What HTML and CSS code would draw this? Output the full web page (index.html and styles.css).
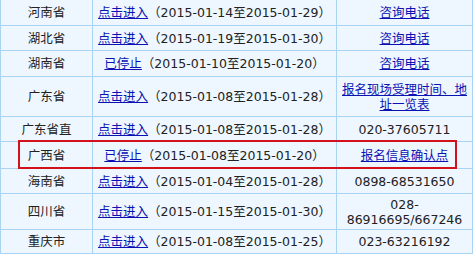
FILE: index.html
```html
<!DOCTYPE html>
<html lang="zh-CN">
<head>
<meta charset="utf-8">
<title>报名时间</title>
<link rel="stylesheet" href="styles.css">
</head>
<body>
<div class="wrap">
<table class="tbl">
  <colgroup><col class="c1"><col class="c2"><col class="c3"></colgroup>
  <tr class="h26"><td>河南省</td><td><a href="#">点击进入</a>（2015-01-14至2015-01-29）</td><td><a href="#">咨询电话</a></td></tr>
  <tr class="h25"><td>湖北省</td><td><a href="#">点击进入</a>（2015-01-19至2015-01-30）</td><td><a href="#">咨询电话</a></td></tr>
  <tr class="h26"><td>湖南省</td><td><a href="#">已停止</a>（2015-01-10至2015-01-20）</td><td><a href="#">咨询电话</a></td></tr>
  <tr class="h40"><td>广东省</td><td><a href="#">点击进入</a>（2015-01-08至2015-01-28）</td><td><a href="#">报名现场受理时间、地址一览表</a></td></tr>
  <tr class="h25"><td>广东省直</td><td><a href="#">点击进入</a>（2015-01-08至2015-01-28）</td><td>020-37605711</td></tr>
  <tr class="h27"><td>广西省</td><td><a href="#">已停止</a>（2015-01-08至2015-01-20）</td><td><a href="#">报名信息确认点</a></td></tr>
  <tr class="h25"><td>海南省</td><td><a href="#">点击进入</a>（2015-01-04至2015-01-28）</td><td>0898-68531650</td></tr>
  <tr class="h36"><td>四川省</td><td><a href="#">点击进入</a>（2015-01-15至2015-01-30）</td><td>028-86916695/667246</td></tr>
  <tr class="h24"><td>重庆市</td><td><a href="#">点击进入</a>（2015-01-08至2015-01-25）</td><td>023-63216192</td></tr>
</table>
<div class="mark"></div>
</div>
</body>
</html>
```
FILE: styles.css
```css
html, body {
  margin: 0;
  padding: 0;
  background: #ffffff;
}
.wrap {
  position: relative;
  width: 473px;
}
.tbl {
  width: 473px;
  border-collapse: separate;
  border-spacing: 0;
  table-layout: fixed;
  background: #eef7ff;
  font-family: "DejaVu Sans", "Noto Sans CJK SC", sans-serif;
  font-size: 12.5px;
  line-height: 15px;
  color: #222;
  border-left: 1px solid #a9d3f2;
}
.c1 { width: 92px; }
.c2 { width: 244px; }
.c3 { width: 136px; }
.tbl td {
  padding: 0 4px;
  text-align: center;
  vertical-align: middle;
  border-right: 1px solid #a9d3f2;
  border-bottom: 1px solid #a9d3f2;
  white-space: normal;
  overflow: hidden;
}
.tbl td:nth-child(2) {
  padding: 0;
  white-space: nowrap;
}
.tbl a {
  color: #0a12b4;
  text-decoration: underline;
}
.h24 { height: 24px; }
.h25 { height: 25px; }
.h26 { height: 26px; }
.h27 { height: 27px; }
.h36 { height: 36px; }
.h40 { height: 40px; }
.mark {
  position: absolute;
  left: 18px;
  top: 140px;
  width: 435px;
  height: 25px;
  border: 2px solid #d3111b;
}
```
